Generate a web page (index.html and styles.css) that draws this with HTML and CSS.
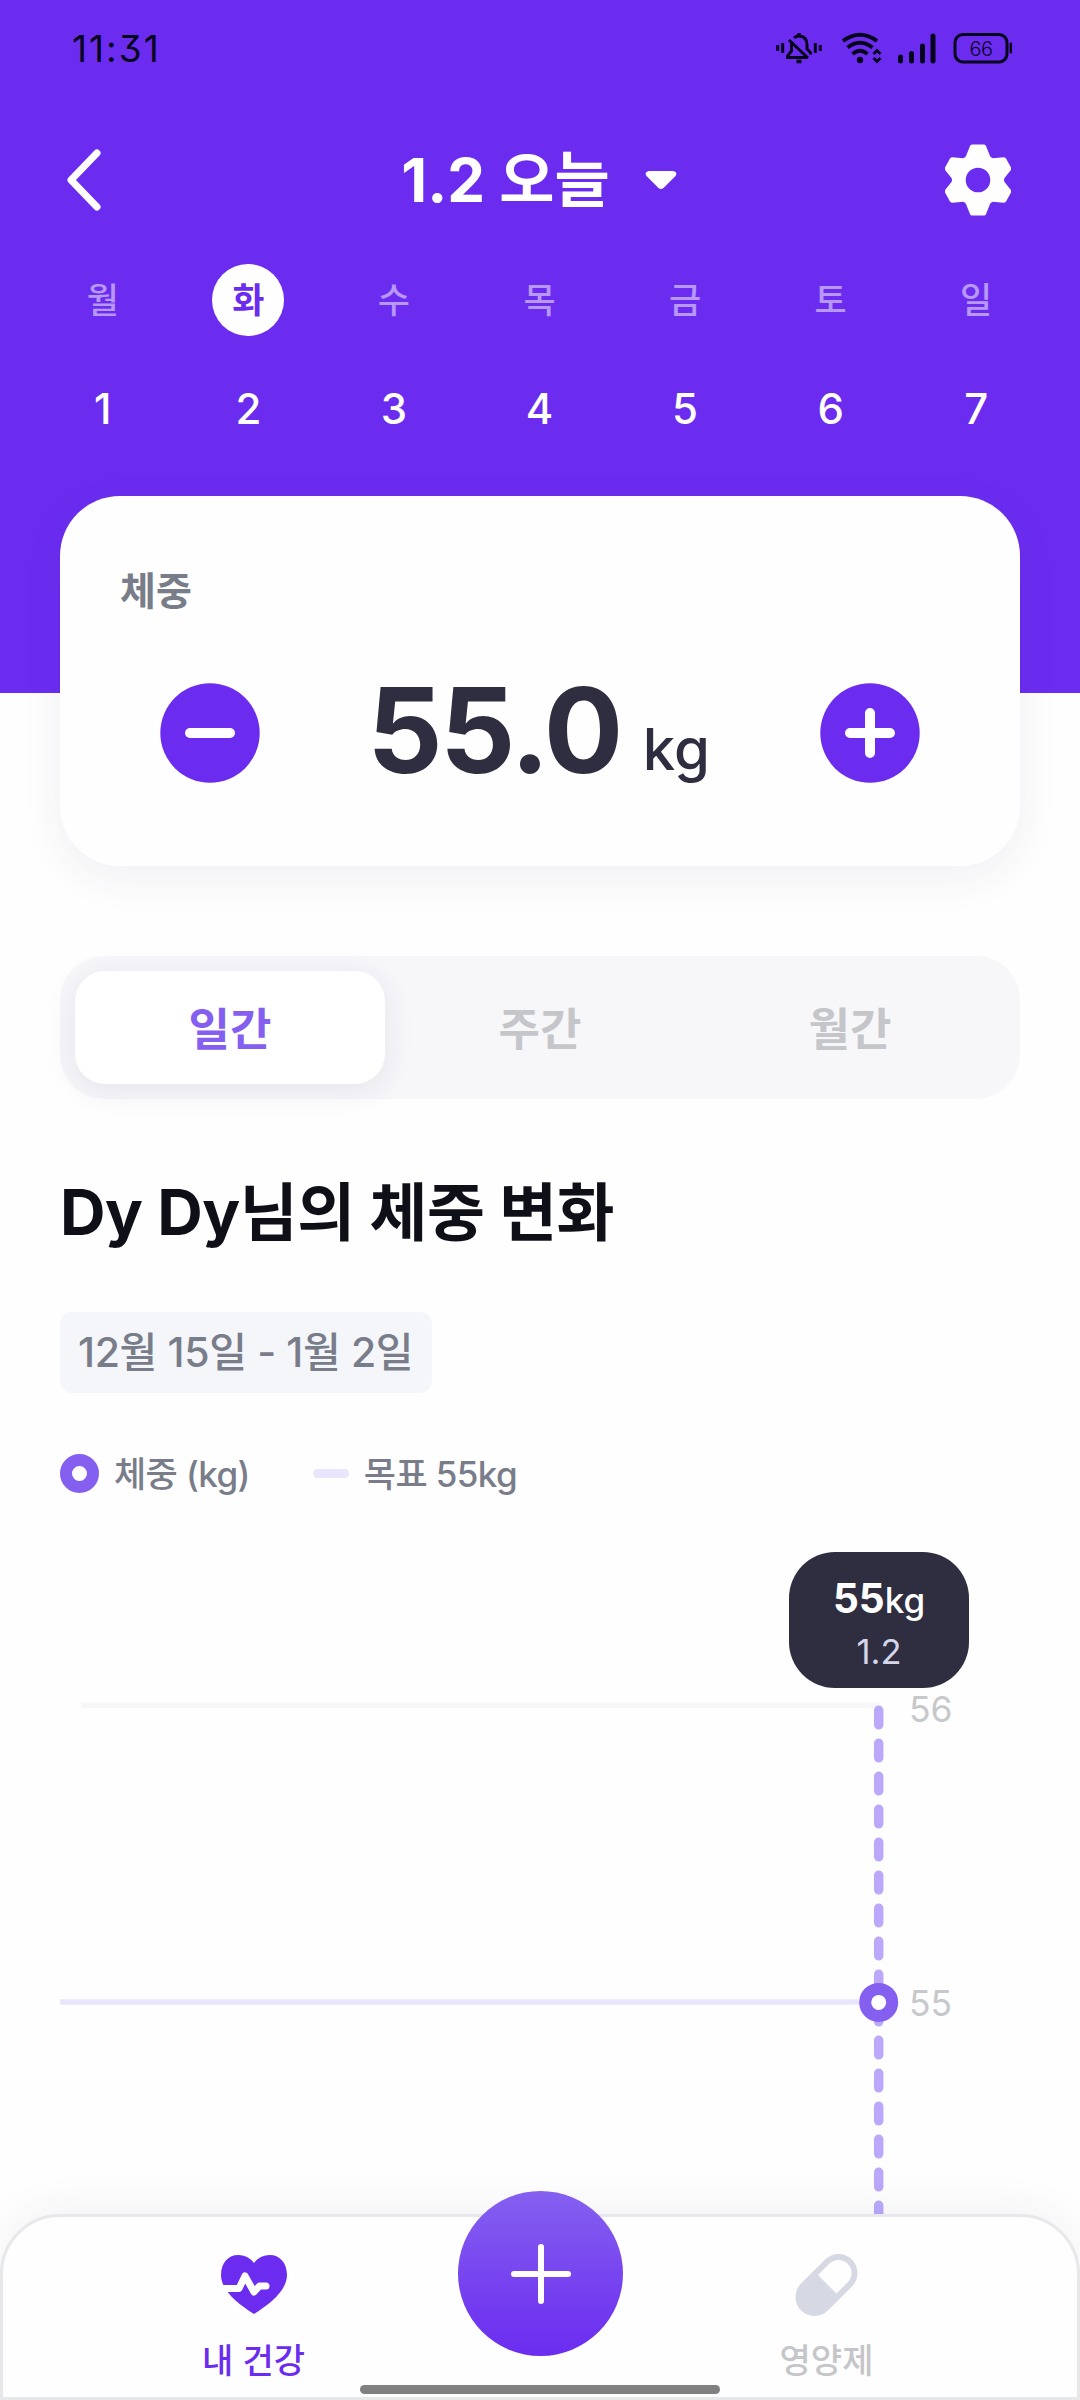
FILE: index.html
```html
<!DOCTYPE html>
<html lang="ko">
<head>
<meta charset="utf-8">
<title>체중</title>
<link rel="stylesheet" href="styles.css">
</head>
<body>
<div class="screen">
  <header class="hero">
    <div class="status">
      <span class="clock">11:31</span>
      <svg class="status-icons" viewBox="0 0 236 32" fill="none" stroke="#08031c">
        <path stroke-width="3" d="M1.7 13v6M6.7 11v10M39.3 11v10M44.3 13v6"/>
        <path stroke-width="3" d="M18 6q2-2 5-2q8 0 8 9v4l3.500 3.500v2M15.500 10v9l-4 5v1.500h20M13 8l19 18"/>
        <path stroke-width="3.400" d="M23 1v3M20.500 29.500h5"/>
        <path stroke-width="4" d="M67 9q17-12.500 34 0M71.500 15.500q12.500-9.500 25 0M76.500 22q7.500-6.500 15 0"/>
        <circle cx="84" cy="28" r="3.200" fill="#08031c" stroke="none"/>
        <path stroke-width="2.800" d="M97.500 22l3.500-3.500l3.500 3.500M97.500 26l3.500 3.500l3.500-3.500"/>
        <path stroke-width="5" stroke-linecap="round" d="M124.500 25v4M135.500 21.500v7.500M146.500 14v15M157 4v25"/>
        <rect x="179" y="2.500" width="52" height="27.500" rx="8" stroke-width="3"/>
        <path stroke-width="3" stroke-linecap="round" d="M235 12v8"/>
        <text class="battery-level" x="205" y="23.500" text-anchor="middle">66</text>
      </svg>
    </div>
    <div class="topbar">
      <svg class="back" viewBox="0 0 34 62"><path d="M30 4L4 31L30 58"/></svg>
      <h1 class="topbar-title">1.2 오늘 <svg class="caret" viewBox="0 0 32 20"><path d="M4 1h24q5 1 2.500 5L18.500 18q-2.500 2-5 0L1.500 6Q-1 2 4 1z"/></svg></h1>
      <svg class="gear" viewBox="0 0 66 72"><path fill-rule="evenodd" d="M27 .5h12q1.500 0 2 1.500l4 10q1 2 3 2.200l10.500-1q1.500 0 2.500 1.300l5 9q.5 1.500-.5 3l-6 7.500q-1 2 0 4l6 7.500q1 1.500.5 3l-5 9q-1 1.300-2.500 1.300l-10.500-1q-2 .2-3 2.200l-4 10q-.5 1.500-2 1.500H27q-1.500 0-2-1.500l-4-10q-1-2-3-2.200l-10.500 1q-1.500 0-2.500-1.300l-5-9q-.5-1.500.5-3l6-7.500q1-2 0-4l-6-7.500q-1-1.500-.5-3l5-9q1-1.300 2.500-1.300l10.500 1q2-.2 3-2.200l4-10q.5-1.500 2-1.500zM33 23.700a12.300 12.300 0 1 0 0 24.600a12.300 12.300 0 1 0 0-24.600z"/></svg>
    </div>
    <div class="week">
      <div class="day"><span class="day-name">월</span><span class="day-num">1</span></div>
      <div class="day"><span class="day-name selected">화</span><span class="day-num">2</span></div>
      <div class="day"><span class="day-name">수</span><span class="day-num">3</span></div>
      <div class="day"><span class="day-name">목</span><span class="day-num">4</span></div>
      <div class="day"><span class="day-name">금</span><span class="day-num">5</span></div>
      <div class="day"><span class="day-name">토</span><span class="day-num">6</span></div>
      <div class="day"><span class="day-name">일</span><span class="day-num">7</span></div>
    </div>
  </header>

  <main class="content">
    <section class="weight-card">
      <h2 class="card-label">체중</h2>
      <div class="stepper">
        <svg class="step" viewBox="0 0 100 100"><circle cx="50" cy="50" r="49.700"/><path d="M30 50h40"/></svg>
        <p class="weight"><span class="weight-num">55.0</span><span class="weight-unit">kg</span></p>
        <svg class="step" viewBox="0 0 100 100"><circle cx="50" cy="50" r="49.700"/><path d="M30 50h40M50 30v40"/></svg>
      </div>
    </section>

    <nav class="tabs">
      <span class="tab active">일간</span>
      <span class="tab">주간</span>
      <span class="tab">월간</span>
    </nav>

    <h2 class="section-title">Dy Dy님의 체중 변화</h2>
    <div class="range">12월 15일 - 1월 2일</div>

    <div class="legend">
      <i class="legend-dot"></i><span class="legend-text">체중 (kg)</span>
      <i class="legend-dash"></i><span class="legend-text">목표 55kg</span>
    </div>

    <section class="chart">
      <svg class="plot" viewBox="0 0 960 680">
        <path class="grid-line" d="M21 170.300H819"/>
        <path class="goal-line" d="M0 467H800"/>
        <path class="marker-line" d="M818.700 175.300V700"/>
        <circle class="marker" cx="818.700" cy="467.400" r="13.500"/>
        <text class="axis" x="849" y="187">56</text>
        <text class="axis" x="849" y="480.500">55</text>
      </svg>
      <div class="tooltip">
        <p class="tip-value"><b>55</b>kg</p>
        <p class="tip-date">1.2</p>
      </div>
    </section>
  </main>

  <footer class="bottom">
    <div class="bottom-item current">
      <svg class="bottom-icon" viewBox="0 0 66 66"><path fill="#6b2cf0" d="M33 62C14 50 0 37 0 23C0 10 8 3 17 3C25 3 30 7 33 11C36 7 41 3 49 3C58 3 66 10 66 23C66 37 52 50 33 62z"/><path class="pulse" d="M0 36.500H18L24 24L33 40L38.500 34H45"/></svg>
      <span>내 건강</span>
    </div>
    <div class="bottom-item">
      <svg class="bottom-icon" viewBox="0 0 66 66"><g transform="translate(32.500 33) rotate(45)" fill="#d6d9e4"><path fill-rule="evenodd" d="M-19-17a19 19 0 0 1 38 0V17a19 19 0 0 1-38 0zM-13-1H13V-17a13 13 0 0 0-26 0z"/></g></svg>
      <span>영양제</span>
    </div>
    <div class="fab"><svg viewBox="0 0 60 60"><path d="M3 30h54M30 3v54"/></svg></div>
    <i class="home-bar"></i>
  </footer>
</div>
</body>
</html>
```
FILE: styles.css
```css
* { box-sizing: border-box; margin: 0; padding: 0; }

body {
  background: #fff;
  font-family: Inter, "Noto Sans CJK KR", sans-serif;
}

.screen {
  width: 1080px;
  height: 2400px;
  display: flex;
  flex-direction: column;
  position: relative;
  overflow: hidden;
  background: #fefefe;
}

svg { display: block; flex: none; }

/* Header */
.hero { height: 693px; flex: none; background: #6b2cf0; }

.status {
  height: 96px;
  padding: 0 68px 0 72px;
  display: flex;
  align-items: center;
  justify-content: space-between;
}
.clock {
  font-size: 37px;
  font-weight: 400;
  letter-spacing: 2px;
  color: #08031c;
  font-feature-settings: "cv09";
}
.status-icons { width: 236px; height: 32px; }
.battery-level { font-size: 20px; font-weight: 300; letter-spacing: -0.5px; fill: #08031c; stroke: none; }

.topbar {
  height: 168px;
  padding: 0 69px 0 67px;
  display: grid;
  grid-template-columns: 66px 1fr 66px;
  align-items: center;
}
.back { width: 34px; height: 62px; fill: none; stroke: #fff; stroke-width: 7; stroke-linecap: round; stroke-linejoin: round; }
.topbar-title {
  display: flex;
  align-items: center;
  justify-content: center;
  gap: 35px;
  font-size: 60px;
  font-weight: 700;
  line-height: 80px;
  color: #fff;
}
.caret { width: 32px; height: 20px; fill: #fff; }
.gear { width: 66px; height: 72px; fill: #fff; }

.week { display: grid; grid-template-columns: repeat(7, 1fr); padding: 0 31px 0 30px; }
.day { display: flex; flex-direction: column; align-items: center; gap: 43px; }
.day-name {
  width: 72px;
  height: 72px;
  border-radius: 50%;
  font-size: 35px;
  font-weight: 500;
  line-height: 72px;
  text-align: center;
  color: #b797f8;
}
.day-name.selected { background: #fff; color: #6b2cf0; font-weight: 700; }
.day-num { font-size: 42px; line-height: 60px; font-weight: 500; color: #fff; }

/* Content */
.content { padding: 0 60px; margin-top: -197px; display: flex; flex-direction: column; align-items: stretch; }

.weight-card {
  height: 370px;
  padding: 65px 60px 0;
  border-radius: 60px;
  background: #fefefe;
  box-shadow: 0 12px 42px rgba(50, 45, 100, .07);
}
.card-label { font-size: 39px; line-height: 60px; font-weight: 700; color: #797d8a; }
.stepper {
  height: 120px;
  margin-top: 52px;
  padding: 0 40px;
  display: flex;
  align-items: center;
  justify-content: space-between;
}
.step { width: 100px; height: 100px; fill: #6b2cf0; stroke: #fff; stroke-width: 10; stroke-linecap: round; }
.step circle { stroke: none; }
.weight { display: flex; align-items: flex-start; gap: 22px; height: 120px; margin-right: 3px; line-height: 114px; color: #2f2e41; }
.weight-num { font-size: 118px; font-weight: 700; letter-spacing: -2.5px; }
.weight-unit { padding-top: 19px; font-size: 58px; font-weight: 500; }

.tabs {
  height: 143px;
  margin-top: 90px;
  padding: 15px;
  display: grid;
  grid-template-columns: repeat(3, 1fr);
  border-radius: 44px;
  background: #f7f7fa;
}
.tab { height: 113px; font-size: 45px; line-height: 117px; font-weight: 700; text-align: center; color: #c5c6ca; border-radius: 30px; }
.tab.active { color: #8560f0; background: #fff; box-shadow: 0 6px 30px rgba(50, 45, 100, .1); }

.section-title { margin-top: 68px; font-size: 63px; line-height: 90px; font-weight: 700; letter-spacing: -0.4px; color: #0f1017; }

.range {
  align-self: flex-start;
  margin-top: 55px;
  padding: 0 19px 0 18px;
  height: 81px;
  border-radius: 12px;
  font-size: 41px;
  font-weight: 500;
  letter-spacing: -0.35px;
  line-height: 80px;
  color: #797d8a;
  background: #f5f6fa;
}

.legend { margin-top: 60px; height: 40px; display: flex; align-items: center; }
.legend-dot { width: 39px; height: 39px; border: 12px solid #8560f0; border-radius: 50%; }
.legend-text { margin-left: 15px; padding-top: 2px; font-size: 35px; font-weight: 500; letter-spacing: -0.6px; line-height: 40px; color: #797d8a; }
.legend-dash { width: 36px; height: 9px; margin-left: 63px; border-radius: 5px; background: #e9e5fc; }

/* Chart */
.chart { position: relative; margin-top: 42px; height: 680px; }
.plot { width: 960px; height: 680px; }
.grid-line { stroke: #f7f7f9; stroke-width: 5.5; }
.goal-line { stroke: #e9e5fc; stroke-width: 5.5; }
.marker-line { stroke: #bba8fa; stroke-width: 9.500; stroke-linecap: round; stroke-dasharray: 14.500 18.500; }
.marker { fill: #fff; stroke: #8560f0; stroke-width: 12; }
.axis { font-size: 35.5px; fill: #c7c8cb; }
.tooltip {
  position: absolute;
  left: 729px;
  top: 17px;
  width: 180px;
  height: 136px;
  padding-top: 22px;
  border-radius: 46px;
  text-align: center;
  color: #fff;
  background: #2f2e41;
}
.tip-value { font-size: 35px; line-height: 50px; font-weight: 500; }
.tip-value b { font-size: 40.5px; font-weight: 700; }
.tip-date { font-size: 34.5px; line-height: 54px; color: #d5d6ea; }

/* Bottom navigation */
.bottom {
  position: absolute;
  left: 0;
  right: 0;
  bottom: 0;
  height: 186px;
  display: flex;
  justify-content: space-between;
  border: 3px solid #e7e8ea;
  border-radius: 60px 60px 0 0;
  background: #fefefe;
  box-shadow: 0 -6px 40px rgba(50, 45, 100, .06);
}
.bottom-item { width: 501px; padding-top: 35px; display: flex; flex-direction: column; align-items: center; font-size: 34px; font-weight: 500; line-height: 50px; color: #c5c6ca; }
.bottom-item.current { color: #6b2cf0; }
.bottom-icon { width: 66px; height: 66px; margin-bottom: 18px; }
.pulse { fill: none; stroke: #fefefe; stroke-width: 7; stroke-linecap: round; stroke-linejoin: round; }
.fab {
  position: absolute;
  left: 455px;
  top: -26px;
  width: 165px;
  height: 165px;
  display: grid;
  place-items: center;
  border-radius: 50%;
  background: linear-gradient(#8560f0, #6b2cf0);
}
.fab svg { width: 60px; height: 60px; stroke: #fff; stroke-width: 6; stroke-linecap: round; }
.home-bar { position: absolute; left: 357px; bottom: 3px; width: 360px; height: 9px; border-radius: 5px; background: #808080; }
```
